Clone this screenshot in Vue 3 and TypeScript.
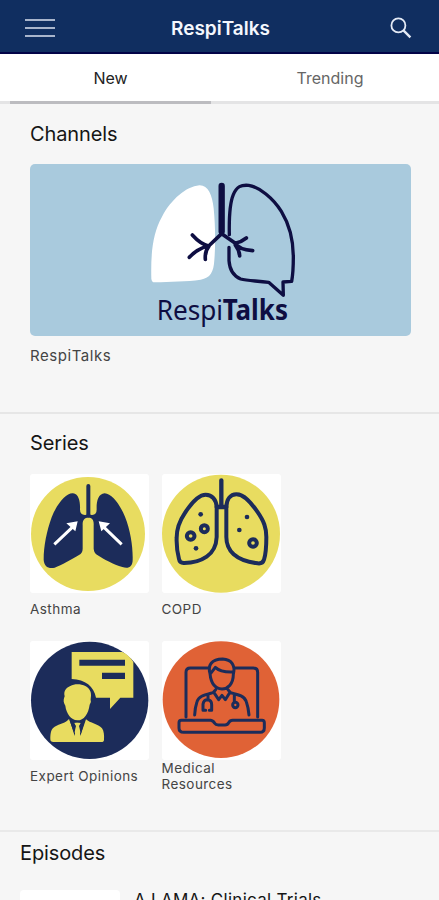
<script setup lang="ts">
import { ref } from 'vue'

type Tab = 'New' | 'Trending'
type Icon = 'asthma' | 'copd' | 'expert' | 'medical'

interface Series {
  title: string
  icon: Icon
  viewBox: string
}

const tabs: Tab[] = ['New', 'Trending']
const active = ref<Tab>('New')

const series: Series[] = [
  { title: 'Asthma', icon: 'asthma', viewBox: '30 27 357 357' },
  { title: 'COPD', icon: 'copd', viewBox: '20 27 357 357' },
  { title: 'Expert Opinions', icon: 'expert', viewBox: '30 18 357 357' },
  { title: 'Medical Resources', icon: 'medical', viewBox: '20 18 357 357' },
]
</script>

<template>
  <div class="app">
    <header class="bar">
      <button class="menu" aria-label="Menu"><i /><i /><i /></button>
      <h1>RespiTalks</h1>
      <button class="search" aria-label="Search">
        <svg viewBox="0 0 22 22" width="22" height="22">
          <circle cx="8.4" cy="8.4" r="7" />
          <path d="M13.4 13.4L20.4 20.4" />
        </svg>
      </button>
    </header>

    <nav class="tabs">
      <button v-for="tab in tabs" :key="tab" class="tab" :class="{ active: tab === active }" @click="active = tab">
        {{ tab }}
      </button>
    </nav>

    <section class="channels">
      <h2>Channels</h2>
      <svg class="cover" viewBox="-330 -18 1143 516">
        <path class="white" d="M34 326C32 250 38 190 66 140C94 88 138 50 178 46C204 45 217 75 221 115C226 165 227 225 223 270C221 306 211 324 182 329C140 335 90 335 44 337Q35 337 34 326Z" />
        <g class="ink">
          <path stroke-width="10" d="M268 194C267 145 269 100 280 74C290 49 304 44 326 46C358 51 399 84 424 124C451 168 460 215 460 262C460 290 459 312 455 334L429 336L430 376L386 337C350 332 322 333 302 327C280 318 269 302 267 272L267 232" />
          <path stroke-width="19" d="M245 48V184" />
          <path stroke-width="11" d="M245 191L206 228Q181 222 157 195M207 228Q194 244 196 268M201 229Q170 238 148 262M245 191L286 220Q304 216 319 204M282 217Q297 240 338 242M286 225Q298 240 299 258" />
        </g>
        <text x="50" y="449" textLength="199" lengthAdjust="spacingAndGlyphs">Respi</text>
        <text class="bold" x="248" y="449" textLength="196" lengthAdjust="spacingAndGlyphs">Talks</text>
      </svg>
      <p class="label">RespiTalks</p>
    </section>

    <section class="series">
      <h2>Series</h2>
      <div class="grid">
        <article v-for="item in series" :key="item.title" class="item">
          <svg class="tile" :viewBox="item.viewBox">
            <template v-if="item.icon === 'asthma'">
              <circle class="yellow" cx="204" cy="207" r="171" />
              <path class="navy" d="M159 85C178 87 181 114 180 133Q180 151 196 150Q205 145 215 150Q230 151 230 133C229 111 234 86 254 85C276 86 301 121 315 155C332 198 339 246 338 284C338 306 325 312 307 306C281 299 250 282 232 270Q222 264 221 251V181C222 164 216 158 205 158C194 158 187 164 188 181V251Q188 264 177 270C154 284 125 300 104 308C85 313 72 303 71 284C71 244 80 198 95 157C109 119 139 83 159 85Z" />
              <path class="trunk" d="M205 63V151" />
              <path class="arrow" d="M103 238L160 184M305 238L249 184" />
              <path class="white" d="M173 169L139 175L166 199ZM236 169L270 175L244 199Z" />
            </template>

            <template v-else-if="item.icon === 'copd'">
              <circle class="yellow" cx="197" cy="206" r="177" />
              <g class="lines">
                <path stroke-width="13" d="M198 46V122M184 126H213" />
                <path d="M184 126C183 104 170 89 151 89C128 89 106 117 88 145C71 170 64 192 64 218C63 244 66 263 71 282Q73 295 87 294C113 294 135 288 154 275C174 261 183 243 184 216ZM213 126C214 103 225 88 243 88C267 88 287 113 306 140C326 169 333 188 333 216C333 241 332 266 326 284Q322 297 307 295C280 292 254 285 235 268C219 253 213 238 213 216Z" />
                <circle cx="106" cy="213" r="11.5" /><circle cx="147" cy="191" r="10.5" /><circle cx="293" cy="234" r="11.5" />
              </g>
              <g class="navy">
                <circle cx="136" cy="148" r="7" /><circle cx="122" cy="250" r="7" />
                <circle cx="275" cy="156" r="7" /><circle cx="252" cy="195" r="7" />
              </g>
            </template>

            <template v-else-if="item.icon === 'expert'">
              <circle class="navy" cx="209" cy="196" r="176" />
              <path class="yellow" d="M155 51H307Q328 61 340 81V188H301L270 222V188H228C222 155 196 133 155 132Z" />
              <path class="navy" d="M178 74H315V92H178ZM246 113H315V132H246Z" />
              <path class="yellow" d="M133 206C129 197 132 190 134 184C130 166 139 159 151 153C170 142 204 149 211 169C215 179 212 190 212 195Q215 201 209 209C205 237 192 256 172 256C153 255 139 236 136 212Z" />
              <path class="yellow" d="M147 252L164 298L168 270L162 262H182L177 270L182 299L198 253C210 265 234 266 246 280C252 288 253 302 252 314Q252 321 244 321H100Q91 321 91 313C91 294 93 282 104 275C119 266 138 264 147 252Z" />
              <path class="navy" d="M149 255Q171 270 195 255L181 303L177 274L181 266H163L168 274L164 303Z" />
              <path class="yellow" d="M163 264H182L177 273L181 292L173 307L164 292L168 273Z" />
            </template>

            <template v-else>
              <circle class="orange" cx="197" cy="194" r="175" />
              <g class="lines thin">
                <path d="M92 246V112Q92 99 105 99H158M240 99H294Q307 99 307 112V246" />
                <path d="M78 256H166Q174 257 178 265Q181 270 189 270H209Q217 270 220 263Q224 256 232 256H320Q327 256 327 263V279Q327 292 314 292H85Q71 292 71 279V263Q71 256 78 256Z" />
                <path d="M164 116C157 91 168 72 202 72C229 74 241 91 234 118C234 147 218 161 200 162C180 161 167 146 164 116ZM166 115L180 97C193 110 212 112 234 111M181 164L173 173C147 180 130 183 125 200Q119 217 118 240M218 164L226 173C251 179 268 184 273 200Q279 217 281 240M176 173L190 194L200 181L210 194L223 173M158 181V193M151 226H143V208Q145 194 156 194Q169 195 169 209V226H162M237 180V200" />
                <circle cx="240" cy="210" r="8" />
              </g>
            </template>
          </svg>
          <p class="label">{{ item.title }}</p>
        </article>
      </div>
    </section>

    <section class="episodes">
      <h2>Episodes</h2>
      <article class="episode">
        <div class="thumb" />
        <h3>A LAMA: Clinical Trials</h3>
      </article>
    </section>
  </div>
</template>

<style>
body {
  background: #f6f6f6;
}
</style>

<style scoped>
.app {
  height: 900px;
  overflow: hidden;
  background: #f6f6f6;
  font-family: Inter, "Liberation Sans", sans-serif;
  color: #151515;
}
h1, h2, h3, p { margin: 0; }
button {
  border: 0;
  padding: 0;
  background: none;
  font: inherit;
}
.bar {
  box-sizing: border-box;
  height: 54px;
  padding: 0 27px 0 25px;
  display: grid;
  grid-template-columns: 30px 1fr 22px;
  align-items: center;
  background: #102e60;
  border-bottom: 2px solid #020347;
}
.menu {
  display: flex;
  flex-direction: column;
  gap: 6px;
  padding-top: 3px;
}
.menu i {
  height: 2px;
  background: #a9b5cc;
}
h1 {
  padding: 6px 4px 0 0;
  font-size: 19px;
  line-height: 24px;
  font-weight: 600;
  text-align: center;
  color: #f4f7fd;
}
.search { height: 22px; padding-top: 2px; }
.search svg {
  display: block;
  fill: none;
  stroke: #e4eaf5;
  stroke-width: 1.8;
}
.search path { stroke-width: 2.4; }
.tabs {
  box-sizing: border-box;
  height: 50px;
  padding: 0 9px 0 10px;
  display: grid;
  grid-template-columns: 201px 1fr;
  background: #fff;
  box-shadow: inset 0 -3px #e4e4e5;
}
.tab {
  padding-top: 1px;
  font-size: 16px;
  color: #666;
  border-bottom: 3px solid transparent;
}
.tab:last-child { padding-left: 19px; }
.tab.active {
  color: #222;
  border-color: #bcbcc0;
}
h2 {
  font-size: 20px;
  line-height: 24px;
  font-weight: 400;
  letter-spacing: -0.12px;
}
.channels {
  box-sizing: border-box;
  height: 310px;
  padding: 18px 28px 0 30px;
  border-bottom: 2px solid #e6e6e6;
}
.cover {
  display: block;
  width: 381px;
  height: 172px;
  margin-top: 18px;
  border-radius: 5px;
  background: #a9cadd;
}
.cover text {
  font: 400 83px "Noto Sans", sans-serif;
  fill: #0e0e42;
}
.cover .bold { font-weight: 700; }
.ink {
  fill: none;
  stroke: #0e0e42;
  stroke-linecap: round;
  stroke-linejoin: round;
}
.label {
  font-size: 13.5px;
  line-height: 16px;
  letter-spacing: 0.45px;
  color: #444;
}
.channels .label {
  margin-top: 12px;
  font-size: 15px;
  letter-spacing: 0.55px;
}
.series {
  box-sizing: border-box;
  height: 418px;
  padding: 17px 30px 0;
  border-bottom: 2px solid #e9e9e9;
}
.grid {
  margin-top: 19px;
  display: grid;
  grid-template-columns: 119px 119px;
  grid-template-rows: 167px 150px;
  column-gap: 12.5px;
}
.tile {
  display: block;
  width: 119px;
  height: 119px;
  border-radius: 3px;
  background: #fff;
}
.item .label { margin-top: 8px; }
.item:last-child .label { margin-top: 0; }
.yellow { fill: #e8dc60; }
.navy { fill: #1c2c5a; }
.orange { fill: #e06236; }
.white { fill: #fff; }
.trunk, .arrow, .lines {
  fill: none;
  stroke: #1c2c5a;
  stroke-width: 12;
}
.trunk { stroke-linecap: round; }
.arrow { stroke: #fff; stroke-width: 9; }
.lines { stroke-linecap: round; stroke-linejoin: round; }
.thin { stroke-width: 9; }
.episodes { padding: 9px 20px 0; }
.episode {
  margin-top: 25px;
  display: flex;
  gap: 14px;
}
.thumb {
  width: 100px;
  height: 76px;
  border-radius: 4px;
  background: #fff;
}
h3 {
  font-size: 17px;
  line-height: 20px;
  font-weight: 400;
  letter-spacing: 0.28px;
}
</style>
